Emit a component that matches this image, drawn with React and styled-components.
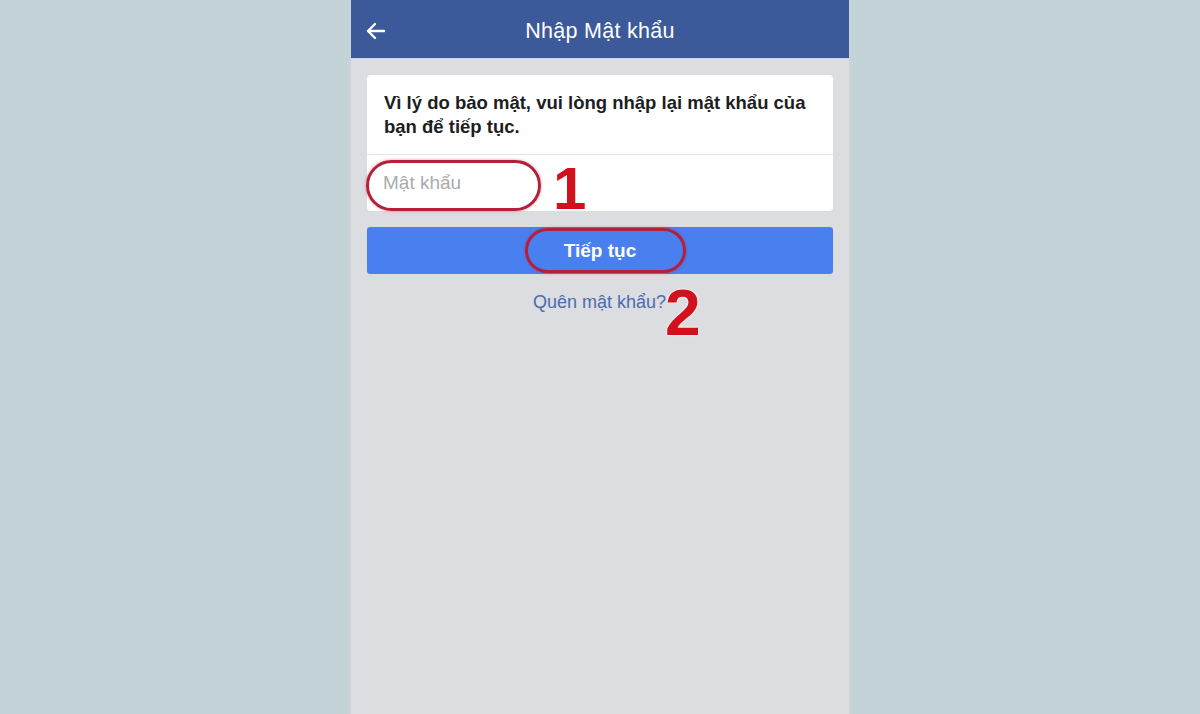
import React from 'react';
import styled, { createGlobalStyle } from 'styled-components';

const GlobalStyle = createGlobalStyle`
  html, body {
    margin: 0;
    padding: 0;
    background: #c3d3d7;
    font-family: "Liberation Sans", Arial, sans-serif;
  }
`;

const Page = styled.div`
  width: 1200px;
  height: 714px;
  display: flex;
  justify-content: center;
  overflow: hidden;
  background: #c3d3d7;
`;

const Phone = styled.div`
  width: 500px;
  height: 714px;
  background: #dcdde1;
  display: flex;
  flex-direction: column;
  border-left: 1px solid #cfd3d8;
  border-right: 1px solid #cfd3d8;
  box-sizing: border-box;
`;

const Header = styled.div`
  height: 59px;
  background: #3c5a99;
  display: flex;
  align-items: center;
  position: relative;
  border-bottom: 1px solid #c9d5ea;
  box-sizing: border-box;
`;

const BackButton = styled.div`
  position: absolute;
  left: 14px;
  top: 20px;
  display: flex;
`;

const Title = styled.h1`
  flex: 1;
  margin: 0;
  text-align: center;
  color: #ffffff;
  font-size: 21.5px;
  font-weight: 500;
  letter-spacing: 0.3px;
  padding-top: 4px;
`;

const Content = styled.div`
  padding: 16px 16px 0;
  display: flex;
  flex-direction: column;
`;

const Card = styled.div`
  background: #ffffff;
  border-radius: 4px;
  display: flex;
  flex-direction: column;
`;

const Message = styled.p`
  margin: 0;
  padding: 16px 20px 15px 17px;
  font-size: 18.5px;
  line-height: 24px;
  font-weight: bold;
  color: #1c1e21;
  border-bottom: 1px solid #e4e5e8;
`;

const InputRow = styled.div`
  height: 56px;
  position: relative;
  display: flex;
  align-items: center;
  padding-left: 16px;
`;

const PasswordInput = styled.input`
  border: none;
  outline: none;
  font-family: inherit;
  font-size: 19px;
  color: #1c1e21;
  background: transparent;
  width: 300px;
  padding: 0;
  &::placeholder {
    color: #a9abae;
  }
`;

const Oval = styled.div`
  position: absolute;
  border: 3px solid #b4203a;
  border-radius: 999px;
  box-shadow: 0 0 3px rgba(180, 32, 58, 0.5);
  pointer-events: none;
  left: ${p => p.left}px;
  top: ${p => p.top}px;
  width: ${p => p.w}px;
  height: ${p => p.h}px;
  box-sizing: border-box;
`;

const Step = styled.span`
  position: absolute;
  left: ${p => p.left}px;
  top: ${p => p.top}px;
  color: #d3111d;
  font-size: ${p => p.size}px;
  font-weight: bold;
  font-family: "Liberation Sans", Arial, sans-serif;
  line-height: 1;
  text-shadow: 0 0 2px #ffffff, 0 0 2px #ffffff;
`;

const ButtonWrap = styled.div`
  position: relative;
  margin-top: 16px;
`;

const Button = styled.button`
  width: 100%;
  height: 47px;
  border: none;
  border-radius: 3px;
  background: #4a7ff0;
  color: #ffffff;
  font-family: inherit;
  font-size: 19px;
  font-weight: bold;
  cursor: pointer;
`;

const LinkWrap = styled.div`
  position: relative;
  margin-top: 18px;
  text-align: center;
`;

const ForgotLink = styled.a`
  color: #4a6cb0;
  font-size: 18px;
  text-decoration: none;
  margin-left: -1px;
`;

const ArrowLeft = () => (
  <svg width="22" height="22" viewBox="0 0 22 22" fill="none" stroke="#fff" strokeWidth="2.4" strokeLinecap="round" strokeLinejoin="round">
    <path d="M19 11H3.5" />
    <path d="M10 4l-7 7 7 7" />
  </svg>
);

export default function App() {
  return (
    <Page>
      <GlobalStyle />
      <Phone>
        <Header>
          <BackButton><ArrowLeft /></BackButton>
          <Title>Nhập Mật khẩu</Title>
        </Header>
        <Content>
          <Card>
            <Message>Vì lý do bảo mật, vui lòng nhập lại mật khẩu của bạn để tiếp tục.</Message>
            <InputRow>
              <PasswordInput type="password" placeholder="Mật khẩu" />
              <Oval left={-1} top={5} w={175} h={51} />
              <Step left={186} top={4} size={60}>1</Step>
            </InputRow>
          </Card>
          <ButtonWrap>
            <Button>Tiếp tục</Button>
            <Oval left={158} top={1} w={161} h={45} />
          </ButtonWrap>
          <LinkWrap>
            <ForgotLink href="#">Quên mật khẩu?</ForgotLink>
            <Step left={298} top={-11} size={64}>2</Step>
          </LinkWrap>
        </Content>
      </Phone>
    </Page>
  );
}
